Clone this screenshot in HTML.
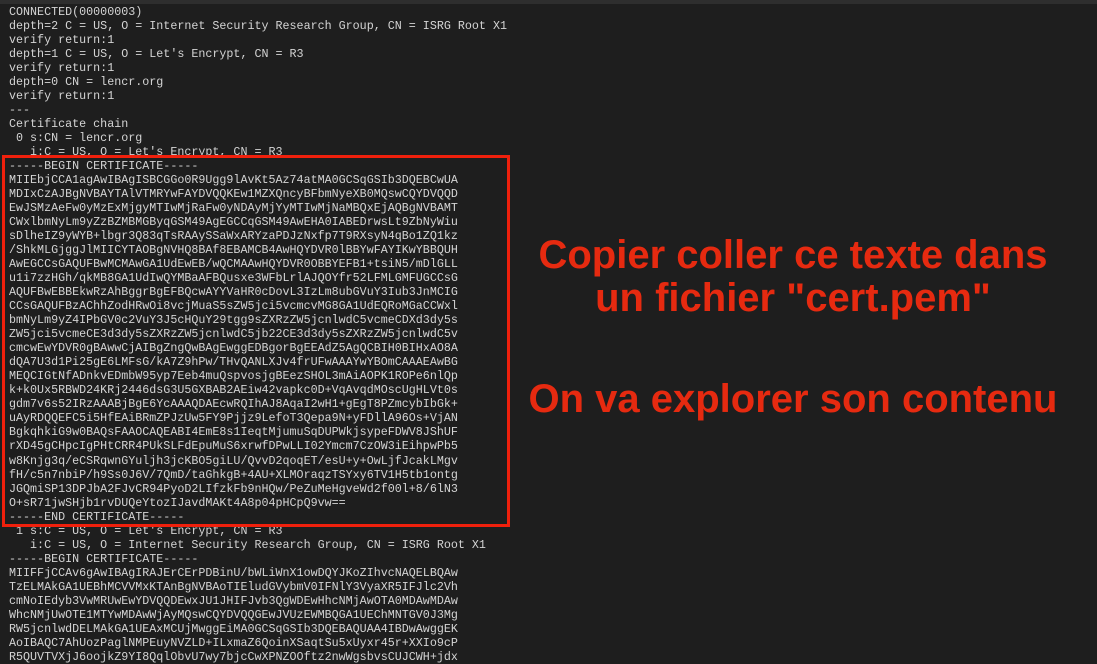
<!DOCTYPE html>
<html><head><meta charset="utf-8"><style>
html,body{margin:0;padding:0;width:1097px;height:664px;overflow:hidden;background:#1e1e1e;}
.top{position:absolute;left:0;top:0;width:1097px;height:4px;background:#2e2e2e;}
pre{position:absolute;left:9px;top:5px;margin:0;font-family:"Liberation Mono",monospace;font-size:11.7px;line-height:14.02px;color:#d4d4d4;}
.box{position:absolute;left:2px;top:155px;width:502px;height:366px;border:3px solid #f0200c;}
.t{position:absolute;left:493px;width:600px;text-align:center;font-family:"Liberation Sans",sans-serif;font-weight:bold;font-size:40px;color:#e62a10;line-height:40px;}
</style></head><body>
<div class="top"></div>
<pre>CONNECTED(00000003)
depth=2 C = US, O = Internet Security Research Group, CN = ISRG Root X1
verify return:1
depth=1 C = US, O = Let's Encrypt, CN = R3
verify return:1
depth=0 CN = lencr.org
verify return:1
---
Certificate chain
 0 s:CN = lencr.org
   i:C = US, O = Let's Encrypt, CN = R3
-----BEGIN CERTIFICATE-----
MIIEbjCCA1agAwIBAgISBCGGo0R9Ugg9lAvKt5Az74atMA0GCSqGSIb3DQEBCwUA
MDIxCzAJBgNVBAYTAlVTMRYwFAYDVQQKEw1MZXQncyBFbmNyeXB0MQswCQYDVQQD
EwJSMzAeFw0yMzExMjgyMTIwMjRaFw0yNDAyMjYyMTIwMjNaMBQxEjAQBgNVBAMT
CWxlbmNyLm9yZzBZMBMGByqGSM49AgEGCCqGSM49AwEHA0IABEDrwsLt9ZbNyWiu
sDlheIZ9yWYB+lbgr3Q83qTsRAAySSaWxARYzaPDJzNxfp7T9RXsyN4qBo1ZQ1kz
/ShkMLGjggJlMIICYTAOBgNVHQ8BAf8EBAMCB4AwHQYDVR0lBBYwFAYIKwYBBQUH
AwEGCCsGAQUFBwMCMAwGA1UdEwEB/wQCMAAwHQYDVR0OBBYEFB1+tsiN5/mDlGLL
u1i7zzHGh/qkMB8GA1UdIwQYMBaAFBQusxe3WFbLrlAJQOYfr52LFMLGMFUGCCsG
AQUFBwEBBEkwRzAhBggrBgEFBQcwAYYVaHR0cDovL3IzLm8ubGVuY3Iub3JnMCIG
CCsGAQUFBzAChhZodHRwOi8vcjMuaS5sZW5jci5vcmcvMG8GA1UdEQRoMGaCCWxl
bmNyLm9yZ4IPbGV0c2VuY3J5cHQuY29tgg9sZXRzZW5jcnlwdC5vcmeCDXd3dy5s
ZW5jci5vcmeCE3d3dy5sZXRzZW5jcnlwdC5jb22CE3d3dy5sZXRzZW5jcnlwdC5v
cmcwEwYDVR0gBAwwCjAIBgZngQwBAgEwggEDBgorBgEEAdZ5AgQCBIH0BIHxAO8A
dQA7U3d1Pi25gE6LMFsG/kA7Z9hPw/THvQANLXJv4frUFwAAAYwYBOmCAAAEAwBG
MEQCIGtNfADnkvEDmbW95yp7Eeb4muQspvosjgBEezSHOL3mAiAOPK1ROPe6nlQp
k+k0Ux5RBWD24KRj2446dsG3U5GXBAB2AEiw42vapkc0D+VqAvqdMOscUgHLVt0s
gdm7v6s52IRzAAABjBgE6YcAAAQDAEcwRQIhAJ8AqaI2wH1+gEgT8PZmcybIbGk+
uAyRDQQEFC5i5HfEAiBRmZPJzUw5FY9Pjjz9LefoT3Qepa9N+yFDllA96Os+VjAN
BgkqhkiG9w0BAQsFAAOCAQEABI4EmE8s1IeqtMjumuSqDUPWkjsypeFDWV8JShUF
rXD45gCHpcIgPHtCRR4PUkSLFdEpuMuS6xrwfDPwLLI02Ymcm7CzOW3iEihpwPb5
w8Knjg3q/eCSRqwnGYuljh3jcKBO5giLU/QvvD2qoqET/esU+y+OwLjfJcakLMgv
fH/c5n7nbiP/h9Ss0J6V/7QmD/taGhkgB+4AU+XLMOraqzTSYxy6TV1H5tb1ontg
JGQmiSP13DPJbA2FJvCR94PyoD2LIfzkFb9nHQw/PeZuMeHgveWd2f00l+8/6lN3
O+sR71jwSHjb1rvDUQeYtozIJavdMAKt4A8p04pHCpQ9vw==
-----END CERTIFICATE-----
 1 s:C = US, O = Let's Encrypt, CN = R3
   i:C = US, O = Internet Security Research Group, CN = ISRG Root X1
-----BEGIN CERTIFICATE-----
MIIFFjCCAv6gAwIBAgIRAJErCErPDBinU/bWLiWnX1owDQYJKoZIhvcNAQELBQAw
TzELMAkGA1UEBhMCVVMxKTAnBgNVBAoTIEludGVybmV0IFNlY3VyaXR5IFJlc2Vh
cmNoIEdyb3VwMRUwEwYDVQQDEwxJU1JHIFJvb3QgWDEwHhcNMjAwOTA0MDAwMDAw
WhcNMjUwOTE1MTYwMDAwWjAyMQswCQYDVQQGEwJVUzEWMBQGA1UEChMNTGV0J3Mg
RW5jcnlwdDELMAkGA1UEAxMCUjMwggEiMA0GCSqGSIb3DQEBAQUAA4IBDwAwggEK
AoIBAQC7AhUozPaglNMPEuyNVZLD+ILxmaZ6QoinXSaqtSu5xUyxr45r+XXIo9cP
R5QUVTVXjJ6oojkZ9YI8QqlObvU7wy7bjcCwXPNZOOftz2nwWgsbvsCUJCWH+jdx</pre>
<div class="box"></div>
<div class="t" style="top:235px">Copier coller ce texte dans</div>
<div class="t" style="top:278px">un fichier "cert.pem"</div>
<div class="t" style="top:379px">On va explorer son contenu</div>
</body></html>
